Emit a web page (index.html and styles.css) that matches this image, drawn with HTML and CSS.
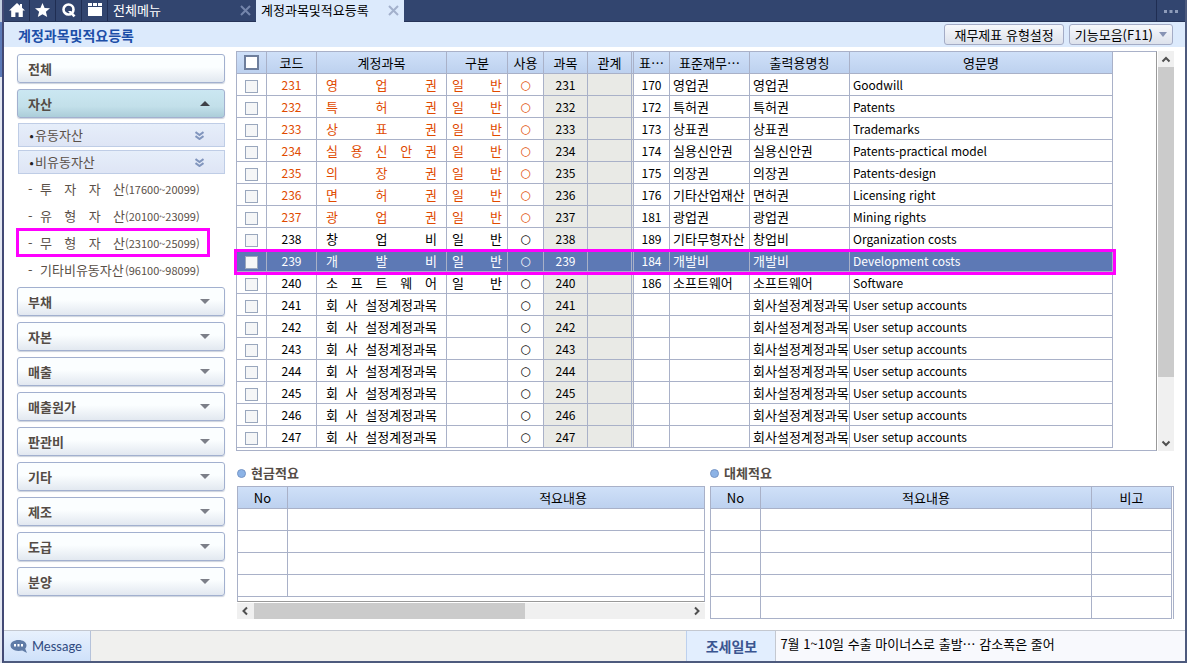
FILE: index.html
```html
<!DOCTYPE html>
<html lang="ko">
<head>
<meta charset="utf-8">
<title>계정과목및적요등록</title>
<link rel="stylesheet" href="styles.css">
</head>
<body>
<div class="frame">
  <nav class="topbar">
    <button class="tool" aria-label="홈"><svg width="16" height="14" viewBox="0 0 16 14"><path d="M8 0 0 7.5h2.2V14h4.2V9.500h3.200V14h4.200V7.500H16L13 4.700V1h-2v1.800z"/></svg></button>
    <button class="tool" aria-label="즐겨찾기"><svg width="15" height="14" viewBox="0 0 15 14"><path d="M7.500 0 9.600 4.900 15 5.300 10.900 8.800 12.200 14 7.500 11.200 2.800 14 4.100 8.800 0 5.300 5.400 4.900z"/></svg></button>
    <button class="tool" aria-label="검색"><svg width="14" height="15" viewBox="0 0 14 15"><circle cx="6.500" cy="6.500" r="5" fill="none" stroke="#fff" stroke-width="2.600"/><path d="M6 8h3l4.500 4.500-2 1.800z"/></svg></button>
    <button class="tool" aria-label="메뉴"><svg width="14" height="13" viewBox="0 0 14 13"><path d="M0 0h4v3H0zM5 0h4v3H5zM10 0h4v3h-4zM0 4h14v9H0z"/></svg></button>
    <div class="tab tab-menu"><span>전체메뉴</span><button class="close" aria-label="닫기"><svg width="11" height="11" viewBox="0 0 11 11"><path d="M1 1l9 9M10 1l-9 9"/></svg></button></div>
    <div class="tab tab-active"><span>계정과목및적요등록</span><button class="close" aria-label="닫기"><svg width="11" height="11" viewBox="0 0 11 11"><path d="M1 1l9 9M10 1l-9 9"/></svg></button></div>
    <button class="more" aria-label="더보기"><svg width="14" height="3" viewBox="0 0 14 3"><path d="M0 0h3v3H0zM5.500 0h3v3h-3zM11 0h3v3h-3z"/></svg></button>
  </nav>
  <header class="titlebar">
    <h1>계정과목및적요등록</h1>
    <button class="action">재무제표 유형설정</button>
    <button class="action">기능모음(F11)<i class="caret"></i></button>
  </header>
  <main class="main">
    <aside class="side">
      <button class="cat">전체</button>
      <button class="cat open">자산<i class="caret"></i></button>
      <div class="group">
        <button class="sub"><b>•</b>유동자산<svg width="9" height="9" viewBox="0 0 9 9"><path d="M.5 1l4 3 4-3M.5 5l4 3 4-3"/></svg></button>
        <button class="sub"><b>•</b>비유동자산<svg width="9" height="9" viewBox="0 0 9 9"><path d="M.5 1l4 3 4-3M.5 5l4 3 4-3"/></svg></button>
      </div>
      <ul class="items">
        <li><span class="dash">-</span><span class="spread name"><span>투</span><span>자</span><span>자</span><span>산</span></span><span class="range">(17600~20099)</span></li>
        <li><span class="dash">-</span><span class="spread name"><span>유</span><span>형</span><span>자</span><span>산</span></span><span class="range">(20100~23099)</span></li>
        <li class="marked"><span class="dash">-</span><span class="spread name"><span>무</span><span>형</span><span>자</span><span>산</span></span><span class="range">(23100~25099)</span></li>
        <li><span class="dash">-</span><span class="name">기타비유동자산</span><span class="range">(96100~98099)</span></li>
      </ul>
      <button class="cat">부채<i class="caret"></i></button>
      <button class="cat">자본<i class="caret"></i></button>
      <button class="cat">매출<i class="caret"></i></button>
      <button class="cat">매출원가<i class="caret"></i></button>
      <button class="cat">판관비<i class="caret"></i></button>
      <button class="cat">기타<i class="caret"></i></button>
      <button class="cat">제조<i class="caret"></i></button>
      <button class="cat">도급<i class="caret"></i></button>
      <button class="cat">분양<i class="caret"></i></button>
    </aside>
    <section class="content">
      <div class="gridrow">
        <div class="gridbox">
          <table class="grid accounts">
            <colgroup><col class="w-check"><col class="w-code"><col class="w-name"><col class="w-kind"><col class="w-use"><col class="w-subj"><col class="w-rel"><col class="w-std"><col class="w-stdname"><col class="w-print"><col></colgroup>
            <thead><tr><th><input type="checkbox" aria-label="전체 선택"></th><th>코드</th><th>계정과목</th><th>구분</th><th>사용</th><th>과목</th><th>관계</th><th>표…</th><th>표준재무…</th><th>출력용명칭</th><th>영문명</th></tr></thead>
            <tbody>
              <tr class="hot"><td><input type="checkbox" aria-label="231"></td><td>231</td><td><div class="spread"><span>영</span><span>업</span><span>권</span></div></td><td><div class="spread"><span>일</span><span>반</span></div></td><td>○</td><td>231</td><td></td><td>170</td><td>영업권</td><td>영업권</td><td>Goodwill</td></tr>
              <tr class="hot"><td><input type="checkbox" aria-label="232"></td><td>232</td><td><div class="spread"><span>특</span><span>허</span><span>권</span></div></td><td><div class="spread"><span>일</span><span>반</span></div></td><td>○</td><td>232</td><td></td><td>172</td><td>특허권</td><td>특허권</td><td>Patents</td></tr>
              <tr class="hot"><td><input type="checkbox" aria-label="233"></td><td>233</td><td><div class="spread"><span>상</span><span>표</span><span>권</span></div></td><td><div class="spread"><span>일</span><span>반</span></div></td><td>○</td><td>233</td><td></td><td>173</td><td>상표권</td><td>상표권</td><td>Trademarks</td></tr>
              <tr class="hot"><td><input type="checkbox" aria-label="234"></td><td>234</td><td><div class="spread"><span>실</span><span>용</span><span>신</span><span>안</span><span>권</span></div></td><td><div class="spread"><span>일</span><span>반</span></div></td><td>○</td><td>234</td><td></td><td>174</td><td>실용신안권</td><td>실용신안권</td><td>Patents-practical model</td></tr>
              <tr class="hot"><td><input type="checkbox" aria-label="235"></td><td>235</td><td><div class="spread"><span>의</span><span>장</span><span>권</span></div></td><td><div class="spread"><span>일</span><span>반</span></div></td><td>○</td><td>235</td><td></td><td>175</td><td>의장권</td><td>의장권</td><td>Patents-design</td></tr>
              <tr class="hot"><td><input type="checkbox" aria-label="236"></td><td>236</td><td><div class="spread"><span>면</span><span>허</span><span>권</span></div></td><td><div class="spread"><span>일</span><span>반</span></div></td><td>○</td><td>236</td><td></td><td>176</td><td>기타산업재산</td><td>면허권</td><td>Licensing right</td></tr>
              <tr class="hot"><td><input type="checkbox" aria-label="237"></td><td>237</td><td><div class="spread"><span>광</span><span>업</span><span>권</span></div></td><td><div class="spread"><span>일</span><span>반</span></div></td><td>○</td><td>237</td><td></td><td>181</td><td>광업권</td><td>광업권</td><td>Mining rights</td></tr>
              <tr><td><input type="checkbox" aria-label="238"></td><td>238</td><td><div class="spread"><span>창</span><span>업</span><span>비</span></div></td><td><div class="spread"><span>일</span><span>반</span></div></td><td>○</td><td>238</td><td></td><td>189</td><td>기타무형자산</td><td>창업비</td><td>Organization costs</td></tr>
              <tr class="selected"><td><input type="checkbox" aria-label="239"></td><td>239</td><td><div class="spread"><span>개</span><span>발</span><span>비</span></div></td><td><div class="spread"><span>일</span><span>반</span></div></td><td>○</td><td>239</td><td></td><td>184</td><td>개발비</td><td>개발비</td><td>Development costs</td></tr>
              <tr><td><input type="checkbox" aria-label="240"></td><td>240</td><td><div class="spread"><span>소</span><span>프</span><span>트</span><span>웨</span><span>어</span></div></td><td><div class="spread"><span>일</span><span>반</span></div></td><td>○</td><td>240</td><td></td><td>186</td><td>소프트웨어</td><td>소프트웨어</td><td>Software</td></tr>
              <tr><td><input type="checkbox" aria-label="241"></td><td>241</td><td><div class="spread"><span>회</span><span>사</span><span>설정계정과목</span></div></td><td></td><td>○</td><td>241</td><td></td><td></td><td></td><td>회사설정계정과목</td><td>User setup accounts</td></tr>
              <tr><td><input type="checkbox" aria-label="242"></td><td>242</td><td><div class="spread"><span>회</span><span>사</span><span>설정계정과목</span></div></td><td></td><td>○</td><td>242</td><td></td><td></td><td></td><td>회사설정계정과목</td><td>User setup accounts</td></tr>
              <tr><td><input type="checkbox" aria-label="243"></td><td>243</td><td><div class="spread"><span>회</span><span>사</span><span>설정계정과목</span></div></td><td></td><td>○</td><td>243</td><td></td><td></td><td></td><td>회사설정계정과목</td><td>User setup accounts</td></tr>
              <tr><td><input type="checkbox" aria-label="244"></td><td>244</td><td><div class="spread"><span>회</span><span>사</span><span>설정계정과목</span></div></td><td></td><td>○</td><td>244</td><td></td><td></td><td></td><td>회사설정계정과목</td><td>User setup accounts</td></tr>
              <tr><td><input type="checkbox" aria-label="245"></td><td>245</td><td><div class="spread"><span>회</span><span>사</span><span>설정계정과목</span></div></td><td></td><td>○</td><td>245</td><td></td><td></td><td></td><td>회사설정계정과목</td><td>User setup accounts</td></tr>
              <tr><td><input type="checkbox" aria-label="246"></td><td>246</td><td><div class="spread"><span>회</span><span>사</span><span>설정계정과목</span></div></td><td></td><td>○</td><td>246</td><td></td><td></td><td></td><td>회사설정계정과목</td><td>User setup accounts</td></tr>
              <tr><td><input type="checkbox" aria-label="247"></td><td>247</td><td><div class="spread"><span>회</span><span>사</span><span>설정계정과목</span></div></td><td></td><td>○</td><td>247</td><td></td><td></td><td></td><td>회사설정계정과목</td><td>User setup accounts</td></tr>
            </tbody>
          </table>
        </div>
        <div class="vscroll">
          <svg width="16" height="16" viewBox="0 0 16 16"><path d="M4.500 10.500 8 7l3.500 3.500"/></svg>
          <div class="thumb"></div>
          <svg width="16" height="16" viewBox="0 0 16 16"><path d="M4.500 6.500 8 10l3.500-3.500"/></svg>
        </div>
      </div>
      <div class="notes">
        <section class="cash">
          <h2><i class="dot"></i>현금적요</h2>
          <div class="notebox scrolled">
            <table class="grid">
              <colgroup><col class="w-code"><col></colgroup>
              <thead><tr><th>No</th><th>적요내용</th></tr></thead>
              <tbody><tr><td></td><td></td></tr><tr><td></td><td></td></tr><tr><td></td><td></td></tr><tr><td></td><td></td></tr></tbody>
            </table>
          </div>
          <div class="hscroll">
            <svg width="17" height="16" viewBox="0 0 17 16"><path d="M10 4.500 6.500 8l3.500 3.500"/></svg>
            <div class="thumb"></div>
            <svg width="17" height="16" viewBox="0 0 17 16"><path d="M7 4.500 10.500 8 7 11.500"/></svg>
          </div>
        </section>
        <section class="transfer">
          <h2><i class="dot"></i>대체적요</h2>
          <div class="notebox edged">
            <table class="grid">
              <colgroup><col class="w-code"><col><col class="w-stdname"></colgroup>
              <thead><tr><th>No</th><th>적요내용</th><th>비고</th></tr></thead>
              <tbody><tr><td></td><td></td><td></td></tr><tr><td></td><td></td><td></td></tr><tr><td></td><td></td><td></td></tr><tr><td></td><td></td><td></td></tr><tr><td></td><td></td><td></td></tr></tbody>
            </table>
          </div>
        </section>
      </div>
    </section>
  </main>
  <footer class="status">
    <button class="message"><svg width="18" height="13" viewBox="0 0 18 13"><path d="M8.500 0C13 0 16.500 2.200 16.500 5.300c0 1.500-.6 2.600-1.300 3.500L17 13l-4.800-2.500c-1.200.3-2.400.4-3.700.4C4 10.900.5 8.600.5 5.500.5 2.300 4 0 8.500 0z"/><path class="eyes" d="M4 4h2v2.500H4zM7.500 4h2v2.500h-2zM11 4h2v2.500h-2z"/></svg>Message</button>
    <div class="blank"></div>
    <strong class="source">조세일보</strong>
    <p class="news">7월 1~10일 수출 마이너스로 출발… 감소폭은 줄어</p>
  </footer>
</div>
</body>
</html>
```
FILE: styles.css
```css
* { box-sizing: border-box; }

body {
  margin: 0;
  padding-left: 2px;
  background: linear-gradient(#c3cfe0 22px, #5c7ab8 22px, #5c7ab8 77px, #e4e8f2 77px);
  color: #000;
  font: 13px/18px "Noto Sans CJK KR", sans-serif;
}
button {
  margin: 0;
  padding: 0;
  border: 0;
  background: none;
  color: inherit;
  font: inherit;
}
h1, h2, p, ul { margin: 0; padding: 0; }
svg { display: block; flex: none; }

.frame {
  display: flex;
  flex-direction: column;
  min-height: 100vh;
  border: solid #4d5a7d;
  border-width: 0 2px 2px;
  border-left-color: #434a75;
  background: #fff;
}

/* top bar */
.topbar {
  display: flex;
  height: 22px;
  border-bottom: 1px solid #263458;
  background: #32456f;
  color: #fff;
}
.tool {
  display: flex;
  justify-content: center;
  width: 26px;
  padding-top: 3px;
  border-right: 1px solid #1f2d52;
}
.tool svg { fill: #fff; }
.tab {
  display: flex;
  align-items: center;
  justify-content: space-between;
  height: 22px;
  padding: 0 5px 2px;
}
.tab-menu { width: 148px; }
.tab-active { width: 148px; background: #dceafc; color: #000; }
.close path { fill: none; stroke: #7485ab; stroke-width: 2; }
.tab-active .close path { stroke: #a3b1cc; }
.more {
  display: flex;
  align-items: center;
  width: 29px;
  margin-left: auto;
  padding: 2px 0 0 7px;
  border-left: 1px solid #1f2d52;
}
.more svg { fill: #8e9cba; }

/* title bar */
.titlebar {
  display: flex;
  align-items: center;
  gap: 5px;
  height: 25px;
  padding: 0 12px 0 14px;
  background: #dceafc;
}
h1 { flex: 1; color: #1c4fa8; font-size: 14px; line-height: 20px; }
.action {
  display: flex;
  align-items: center;
  gap: 6px;
  height: 21px;
  padding: 0 5px;
  border: 1px solid #a4acc6;
  border-radius: 3px;
  background: linear-gradient(#f6f8fc, #dde2ec);
  white-space: nowrap;
}
.action:first-of-type { padding: 0 9px; }
.caret {
  border: solid transparent;
  border-width: 5px 5px 0;
  border-top-color: #7c7f88;
}
.action .caret { border-width: 5px 4px 0; border-top-color: #8793b4; }

/* main area */
.main {
  display: flex;
  flex: 1;
  gap: 11px;
  padding: 4px 11px 11px 13px;
}
.side {
  display: flex;
  flex-direction: column;
  flex: none;
  gap: 6px;
  width: 208px;
  padding-top: 3px;
}
.cat {
  display: flex;
  align-items: center;
  justify-content: space-between;
  height: 29px;
  padding: 0 14px 0 10px;
  border: 1px solid #a2b0cf;
  border-radius: 3px;
  background: linear-gradient(#fbfeff 45%, #e2e8f0);
  box-shadow: 0 1px 1px #cdd3dd;
  color: #544c46;
  font-weight: bold;
}
.cat.open { background: linear-gradient(#cbe7f2, #c3e0ea 60%, #abcdd9); }
.open .caret { border-width: 0 5px 5px; border-bottom-color: #3f4148; }
.group {
  display: grid;
  gap: 3px;
  margin-top: -1px;
  padding-left: 1px;
}
.sub {
  display: flex;
  align-items: center;
  height: 24px;
  padding: 0 20px 0 9px;
  border: 1px solid #bfcde6;
  background: linear-gradient(#e6eefa, #dee5f5);
  color: #5a5048;
}
.sub b { width: 7px; color: #222; font-size: 11px; }
.sub svg { margin-left: auto; fill: none; stroke: #8095bd; stroke-width: 2; }
.items { margin: -5px 0 -2px; list-style: none; color: #5a5048; }
.items li {
  position: relative;
  display: flex;
  align-items: center;
  height: 27px;
  padding-left: 11px;
}
.dash { width: 12px; }
.name { width: 85px; white-space: nowrap; }
.range { font-size: 11px; }
.marked::after {
  content: "";
  position: absolute;
  inset: -1px 15px -1px -1px;
  border: 3px solid #ff00ff;
}
.spread { display: flex; justify-content: space-between; }

/* account grid */
.content { flex: 1; min-width: 0; }
.gridrow { display: flex; gap: 1px; }
.gridbox {
  flex: 1;
  padding: 0 43px 2px 0;
  border: 1px solid #a9b1c8;
  border-right-color: #999;
}
.grid {
  width: 100%;
  border-spacing: 0;
  table-layout: fixed;
}
.grid th, .grid td {
  height: 22px;
  padding: 0;
  border: solid #a9b1c8;
  border-width: 0 1px 1px 0;
  line-height: 20px;
  white-space: nowrap;
  overflow: hidden;
}
.grid th {
  background: linear-gradient(#cfe0f8, #bdd1ef);
  font-weight: normal;
}
.w-check { width: 30px; }
.w-code { width: 50px; }
.w-name { width: 130px; }
.w-kind { width: 61px; }
.w-use { width: 36px; }
.w-subj { width: 44px; }
.w-rel { width: 46px; }
.w-std { width: 36px; }
.w-stdname { width: 80px; }
.w-print { width: 100px; }
.accounts td { text-align: center; font-size: 12px; }
.accounts .spread, .accounts td:nth-child(9), .accounts td:nth-child(10) { font-size: 13px; }
.accounts td:nth-child(3) { padding: 0 9px; }
.accounts td:nth-child(4) { padding: 0 5px; }
.accounts td:nth-child(5) { font-family: "DejaVu Sans", sans-serif; }
.accounts td:nth-child(6), .accounts td:nth-child(7) { background: #e9eae6; }
.grid.accounts th:nth-child(7), .grid.accounts td:nth-child(7) { border-right: 3px double #a9b1c8; }
.accounts td:nth-child(n+9) { padding-left: 3px; text-align: left; }
.hot td:nth-child(-n+5) { color: #e04a00; }
.accounts .selected td { background: #5d79b5; color: #fff; }
.selected { position: relative; }
.selected td:first-child::after {
  content: "";
  position: absolute;
  inset: -1px -3px -3px;
  border: 3px solid #ff00ff;
}
input[type="checkbox"] {
  appearance: none;
  display: block;
  width: 13px;
  height: 13px;
  margin: 3px auto 0;
  border: 1px solid #9aa7bd;
  background: #f5f6f7;
}
th input[type="checkbox"] {
  width: 15px;
  height: 15px;
  margin-top: 0;
  border: 2px solid #6e7e9c;
  background: #fff;
}

/* scroll bars */
.vscroll, .hscroll { display: flex; background: #f0f0f0; }
.vscroll { flex-direction: column; width: 16px; }
.vscroll .thumb { height: 310px; margin-bottom: auto; }
.hscroll { height: 16px; margin-top: 1px; }
.hscroll .thumb { width: 58%; margin-right: auto; }
.thumb { background: #cbcbcb; }
.vscroll path, .hscroll path { fill: none; stroke: #505050; stroke-width: 2; }

/* note panels */
.notes { display: flex; gap: 5px; padding-left: 1px; }
.cash { flex: 468 0 0; min-width: 0; }
.transfer { flex: 464 0 0; min-width: 0; }
h2 {
  display: flex;
  align-items: center;
  gap: 5px;
  height: 35px;
  padding-top: 9px;
  color: #544c46;
  font-size: 13px;
}
.dot {
  width: 9px;
  height: 9px;
  border: 1px solid #7796c6;
  border-radius: 50%;
  background: #8cb3e6;
}
.notebox { border: solid #a9b1c8; border-width: 1px 1px 0 1px; }
.scrolled { padding-bottom: 4px; border-bottom: 1px solid #999; overflow: hidden; }
.scrolled .grid { width: 129%; }
.edged { padding-right: 1px; }

/* status bar */
.status {
  display: flex;
  height: 31px;
  border-top: 1px solid #c4c8d0;
  background: #f0f0ee;
}
.message {
  display: flex;
  align-items: center;
  gap: 4px;
  width: 87px;
  padding-left: 6px;
  border-right: 1px solid #b5c2da;
  background: linear-gradient(#e8f1fd, #cfe1fa);
  color: #2f4a80;
  font: 13px/18px Lato, sans-serif;
}
.message svg { fill: #5f7ba6; }
.message .eyes { fill: #fff; }
.blank { flex: 596 0 0; }
.source {
  display: flex;
  align-items: center;
  justify-content: center;
  width: 90px;
  border-left: 1px solid #bcd0ee;
  border-right: 1px solid #c4c8d0;
  background: #e2eefe;
  color: #3a5590;
  font-size: 14px;
}
.news {
  flex: 401 0 0;
  padding: 4px;
  background: #f8f9fd;
  white-space: nowrap;
}
```
